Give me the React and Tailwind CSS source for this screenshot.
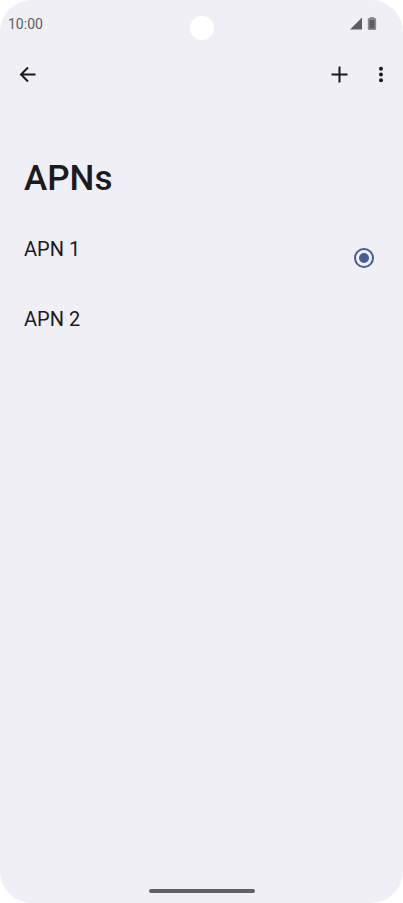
import { useState } from 'react';

const APNS = [
    { id: 'apn-1', name: 'APN 1', selectable: true },
    { id: 'apn-2', name: 'APN 2', selectable: false },
];

function StatusBar() {
    return (
        <div className="relative flex h-12 items-center justify-between pl-2 pr-[26px] text-[#5d5d63]">
            <span className="text-sm">10:00</span>
            <span className="absolute inset-x-0 top-4 mx-auto size-6 rounded-full bg-white" />
            <div className="flex items-center gap-1">
                <svg className="size-4" viewBox="0 0 16 16" fill="currentColor" aria-hidden="true">
                    <path d="M15 1.500v12H3z" />
                </svg>
                <svg className="h-4 w-[10px]" viewBox="0 0 10 16" aria-hidden="true">
                    <path d="M3 1h4v1h1a1.200 1.200 0 0 1 1.200 1.200v9.600A1.200 1.200 0 0 1 8 14H2a1.200 1.200 0 0 1-1.200-1.200V3.200A1.200 1.200 0 0 1 2 2h1z" fill="#8b8b90" />
                    <path d="M2.500 4h5v8.500h-5z" fill="currentColor" />
                </svg>
            </div>
        </div>
    );
}

function Toolbar() {
    return (
        <header className="flex h-[54px] items-center pl-1">
            <button type="button" aria-label="Back" className="flex size-12 items-center justify-center">
                <svg className="size-6" viewBox="0 0 24 24" fill="none" stroke="currentColor" strokeWidth="2" aria-hidden="true">
                    <path d="M19.500 11.500H5M12 4.500l-7 7 7 7" />
                </svg>
            </button>
            <button type="button" aria-label="Add APN" className="ml-auto flex size-10 items-center justify-center">
                <svg className="size-6" viewBox="0 0 24 24" fill="none" stroke="currentColor" strokeWidth="2" aria-hidden="true">
                    <path d="M12.500 3.500v16M4.500 11.500h16" />
                </svg>
            </button>
            <button type="button" aria-label="More options" className="flex h-10 w-11 items-center justify-center">
                <svg className="size-6" viewBox="0 0 24 24" fill="currentColor" aria-hidden="true">
                    <circle cx="12" cy="5.700" r="2" />
                    <circle cx="12" cy="11.500" r="2" />
                    <circle cx="12" cy="17.300" r="2" />
                </svg>
            </button>
        </header>
    );
}

function ApnRow({ apn, checked, onSelect }) {
    if (!apn.selectable) {
        return (
            <li className="flex h-[70px] items-start">
                <button type="button" className="text-xl">{apn.name}</button>
            </li>
        );
    }

    return (
        <li className="flex h-[70px] items-start justify-between">
            <label htmlFor={apn.id} className="text-xl">{apn.name}</label>
            <input
                id={apn.id}
                type="radio"
                name="apn"
                checked={checked}
                onChange={() => onSelect(apn.id)}
                className="mt-[13px] flex size-5 appearance-none items-center justify-center rounded-full border-2 border-[#475d92] before:size-[10px] before:rounded-full checked:before:bg-[#475d92]"
            />
        </li>
    );
}

export default function App() {
    const [selected, setSelected] = useState('apn-1');

    return (
        <div className="flex min-h-screen flex-col rounded-[32px] bg-[#f0eff6] font-['Roboto',sans-serif] text-[#1a1b20]">
            <StatusBar />
            <Toolbar />
            <main className="flex-1 pl-6 pr-[29px] pt-[57px]">
                <h1 className="text-[35px] leading-10 font-medium">APNs</h1>
                <ul className="pt-9">
                    {APNS.map((apn) => (
                        <ApnRow key={apn.id} apn={apn} checked={selected === apn.id} onSelect={setSelected} />
                    ))}
                </ul>
            </main>
            <div className="flex justify-center pb-[10px]">
                <span className="h-1 w-[106px] rounded-full bg-[#606166]" />
            </div>
        </div>
    );
}
